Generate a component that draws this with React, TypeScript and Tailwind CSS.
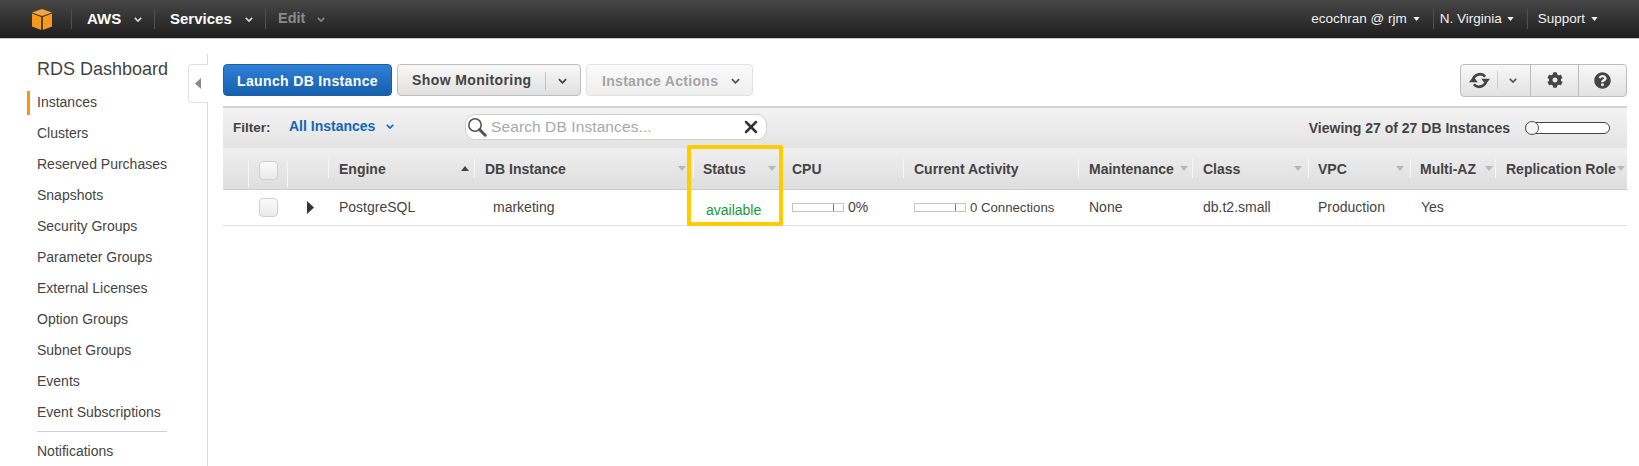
import { FaCog, FaQuestionCircle } from 'react-icons/fa';
import { X } from 'lucide-react';

const navItems = [
  'Instances',
  'Clusters',
  'Reserved Purchases',
  'Snapshots',
  'Security Groups',
  'Parameter Groups',
  'External Licenses',
  'Option Groups',
  'Subnet Groups',
  'Events',
  'Event Subscriptions',
];

const columns = [
  { label: 'Engine', sort: 'up', pad: 'pl-[10px]', caretClass: 'right-[5px]' },
  { label: 'DB Instance', pad: 'pl-[10px]', caretClass: 'right-[7px]' },
  { label: 'Status', pad: 'pl-[9px]', caretClass: 'right-[5px]' },
  { label: 'CPU', pad: 'pl-[10px]' },
  { label: 'Current Activity', pad: 'pl-[10px]' },
  { label: 'Maintenance', pad: 'pl-[10px]', caretClass: 'right-[4px]' },
  { label: 'Class', pad: 'pl-[10px]', caretClass: 'right-[6px]' },
  { label: 'VPC', pad: 'pl-[9px]', caretClass: 'right-[6px]' },
  { label: 'Multi-AZ', pad: 'pl-[9px]', caretClass: 'right-[2px]' },
  { label: 'Replication Role', pad: 'pl-[10px]', caretClass: 'right-[2px]' },
];

const gridCols = 'grid grid-cols-[25px_40px_40px_146px_219px_88px_122px_175px_114px_116px_102px_85px_132px]';

function Chevron({ className }: { className?: string }) {
  return (
    <svg viewBox="0 0 10 6" className={className} fill="none" stroke="currentColor" strokeWidth="2">
      <polyline points="1,1 5,5 9,1" />
    </svg>
  );
}

function Caret({ up, className }: { up?: boolean; className?: string }) {
  return (
    <svg viewBox="0 0 8 5" className={className} fill="currentColor">
      <polygon points={up ? '0,5 8,5 4,0' : '0,0 8,0 4,5'} />
    </svg>
  );
}

function RefreshIcon({ className }: { className?: string }) {
  return (
    <svg viewBox="0 0 24 24" className={className}>
      <g fill="none" stroke="currentColor" strokeWidth="3">
        <path d="M4.5 13 A8 8 0 0 1 18.5 7.5" />
        <path d="M19.5 11 A8 8 0 0 1 5.5 16.5" />
      </g>
      <polygon points="14,10 24,10 19,16.5" fill="currentColor" />
      <polygon points="0,14 10,14 5,7.5" fill="currentColor" />
    </svg>
  );
}

function SearchIcon({ className }: { className?: string }) {
  return (
    <svg viewBox="0 0 20 20" className={className} fill="none" stroke="currentColor">
      <circle cx="8" cy="8" r="6.2" strokeWidth="1.6" />
      <line x1="12.6" y1="12.6" x2="18.2" y2="18.2" strokeWidth="3" strokeLinecap="round" />
    </svg>
  );
}

function NavDivider() {
  return <div className="h-[20px] w-px bg-[#4f4f4f]" />;
}

function TopBar() {
  return (
    <header className="flex h-[39px] items-center border-b border-[#c8c8c8] bg-gradient-to-b from-[#474747] to-[#1e1e1e] text-white">
      <svg viewBox="0 0 20 21" className="ml-[32px] h-[21px] w-[20px]">
        <polygon points="10,0 20,3.5 10,7 0,3.5" fill="#f9a43a" />
        <polygon points="0,4.6 9.2,8 9.2,21 0,17.4" fill="#f8981d" />
        <polygon points="20,4.6 10.8,8 10.8,21 20,17.4" fill="#f8981d" />
      </svg>
      <div className="ml-[19px]"><NavDivider /></div>
      <span className="ml-[15px] w-[34px] text-[15px] font-bold">AWS</span>
      <Chevron className="ml-[13px] h-[5px] w-[8px] text-[#d8d8d8]" />
      <div className="ml-[12px]"><NavDivider /></div>
      <span className="ml-[15px] w-[62px] text-[15px] font-bold">Services</span>
      <Chevron className="ml-[13px] h-[5px] w-[8px] text-[#d8d8d8]" />
      <div className="ml-[12px]"><NavDivider /></div>
      <span className="ml-[12px] w-[26px] text-[14.5px] font-bold text-[#8a8a8a]">Edit</span>
      <Chevron className="ml-[13px] h-[5px] w-[8px] text-[#8a8a8a]" />

      <div className="ml-auto flex items-center text-[13.5px] text-[#f0f0f0]">
        <span>ecochran @ rjm</span>
        <Caret className="ml-[6px] h-[4px] w-[7px]" />
        <div className="ml-[13px]"><NavDivider /></div>
        <span className="ml-[6px]">N. Virginia</span>
        <Caret className="ml-[5px] h-[4px] w-[7px]" />
        <div className="ml-[13px]"><NavDivider /></div>
        <span className="ml-[10px]">Support</span>
        <Caret className="ml-[6px] mr-[41px] h-[4px] w-[7px]" />
      </div>
    </header>
  );
}

function Sidebar() {
  return (
    <aside className="relative mt-[15px] h-[412px] w-[208px] shrink-0 border-r border-[#d9d9d9] text-[#444]">
      <h1 className="ml-[37px] flex h-[30px] items-center text-[18px] font-normal">RDS Dashboard</h1>
      <nav className="mt-[3px] text-[14px]">
        {navItems.map((item, i) => (
          <div key={item} className="flex h-[31px] items-center pl-[27px]">
            <span className={`flex h-[24px] items-center border-l-[3px] pl-[7px] ${i === 0 ? 'border-[#f7941e]' : 'border-transparent'}`}>
              {item}
            </span>
          </div>
        ))}
      </nav>
      <div className="ml-[37px] mt-[3px] h-px w-[130px] bg-[#cfcfcf]" />
      <div className="ml-[37px] mt-[9px] text-[14px]">Notifications</div>
      {/* collapse tab sits over the sidebar rule */}
      <div className="absolute right-[-1px] top-[10px] flex h-[39px] w-[20px] items-center justify-center rounded-l-[4px] border border-r-0 border-[#e0e0e0] bg-white pr-[2px]">
        <svg viewBox="0 0 6 11" className="h-[11px] w-[6px] text-[#8a8a8a]" fill="currentColor">
          <polygon points="6,0 6,11 0,5.5" />
        </svg>
      </div>
    </aside>
  );
}

function Toolbar() {
  return (
    <div className="flex h-[32px] items-center text-[14px] font-bold">
      <button className="h-[32px] w-[169px] rounded-[4px] border border-[#1a5fa8] bg-gradient-to-b from-[#2f80d8] to-[#1560ac] pt-[2px] tracking-[0.35px] text-white">
        Launch DB Instance
      </button>
      <button className="ml-[5px] flex h-[32px] w-[184px] items-center rounded-[4px] border border-[#bdbdbd] bg-gradient-to-b from-[#f8f8f8] to-[#e0e0e0] pt-[1px] tracking-[0.4px] text-[#444]">
        <span className="ml-[14px] w-[133px] text-left">Show Monitoring</span>
        <span className="h-[18px] w-px bg-[#c4c4c4]" />
        <Chevron className="ml-[12px] h-[6px] w-[9px] text-[#444]" />
      </button>
      <button className="ml-[5px] flex h-[32px] w-[167px] items-center rounded-[4px] border border-[#e2e2e2] bg-gradient-to-b from-[#fafafa] to-[#efefef] pt-[2px] tracking-[0.3px] text-[#a5a5a5]">
        <span className="ml-[15px] text-left">Instance Actions</span>
        <Chevron className="ml-[13px] h-[6px] w-[9px] text-[#555]" />
      </button>
      <div className="ml-auto flex h-[33px] w-[167px] items-center rounded-[4px] border border-[#bdbdbd] bg-gradient-to-b from-[#f8f8f8] to-[#e2e2e2] text-[#444]">
        <div className="flex h-full w-[70px] items-center border-r border-[#bdbdbd]">
          <RefreshIcon className="ml-[8px] h-[21px] w-[21px]" />
          <span className="ml-[7px] h-[18px] w-px bg-[#cfcfcf]" />
          <Chevron className="ml-[11px] h-[5px] w-[8px] text-[#555]" />
        </div>
        <div className="flex h-full w-[48px] items-center justify-center border-r border-[#bdbdbd]">
          <FaCog className="text-[16px]" />
        </div>
        <div className="flex h-full flex-1 items-center justify-center">
          <FaQuestionCircle className="text-[17px]" />
        </div>
      </div>
    </div>
  );
}

function FilterBar() {
  return (
    <div className="mt-[10px] flex h-[42px] items-center border-t-2 border-[#d4d4d4] bg-gradient-to-b from-[#f3f3f3] to-[#e3e3e3] text-[#444]">
      <span className="ml-[10px] w-[56px] text-[13.5px] font-bold">Filter:</span>
      <div className="mb-[4px] flex w-[176px] items-center text-[#1166bb]">
        <span className="text-[14px] font-bold">All Instances</span>
        <Chevron className="ml-[11px] h-[5px] w-[8px]" />
      </div>
      <div className="mb-[2px] flex h-[26px] w-[302px] items-center rounded-[10px] border border-[#cfcfcf] bg-white">
        <SearchIcon className="ml-[1px] h-[20px] w-[20px] text-[#555]" />
        <span className="ml-[4px] text-[15.5px] tracking-[0.1px] text-[#a8a8a8]">Search DB Instances...</span>
        <X className="ml-auto mr-[5px] h-[20px] w-[20px] text-[#333]" strokeWidth={3} />
      </div>
      <span className="ml-auto text-[14px] font-bold">Viewing 27 of 27 DB Instances</span>
      <div className="ml-[15px] mr-[17px] flex h-[12px] w-[85px] items-center rounded-full border border-[#444] bg-white">
        <div className="-ml-px h-[14px] w-[14px] rounded-full border border-[#555] bg-[#f4f4f4]" />
      </div>
    </div>
  );
}

function Meter() {
  return (
    <div className="flex h-[9px] w-[52px] items-center justify-end border border-[#c4c4c4] bg-white pr-[9px]">
      <div className="h-full w-px bg-[#e0503f]" />
    </div>
  );
}

function Checkbox() {
  return <div className="h-[19px] w-[19px] rounded-[4px] border border-[#cfcfcf] bg-gradient-to-b from-[#fbfbfb] to-[#eaeaea]" />;
}

function InstancesTable() {
  return (
    <div className="relative">
      <div className={`${gridCols} h-[42px] items-center border-b border-[#cccccc] bg-gradient-to-b from-[#efefef] to-[#dedede] text-[14px] font-bold text-[#444]`}>
        <div />
        <div className="mb-[2px] flex h-[26px] items-start justify-center self-end border-x border-[#f7f7f7] pl-[1px]">
          <Checkbox />
        </div>
        <div />
        {columns.map((col) => (
          <div key={col.label} className={`relative flex h-[19px] items-center whitespace-nowrap border-l border-[#f7f7f7] pt-[2px] ${col.pad}`}>
            {col.label}
            {col.caretClass && (
              <Caret up={col.sort === 'up'} className={`absolute top-[7px] h-[5px] w-[8px] ${col.caretClass} ${col.sort === 'up' ? 'text-[#444]' : 'text-[#b8b8b8]'}`} />
            )}
          </div>
        ))}
      </div>
      <div className={`${gridCols} h-[36px] items-center border-b border-[#dddddd] text-[14px] text-[#444]`}>
        <div />
        <div className="flex justify-center pl-[1px]"><Checkbox /></div>
        <div className="flex justify-center pl-[4px]">
          <svg viewBox="0 0 7 13" className="h-[13px] w-[7px] text-[#333]" fill="currentColor">
            <polygon points="0,0 7,6.5 0,13" />
          </svg>
        </div>
        <div className="pl-[11px]">PostgreSQL</div>
        <div className="pl-[19px]">marketing</div>
        <div className="pl-[13px] pt-[6px] text-[#159a35]">available</div>
        <div className="flex items-center pl-[11px]">
          <Meter />
          <span className="ml-[4px]">0%</span>
        </div>
        <div className="flex items-center pl-[11px]">
          <Meter />
          <span className="ml-[4px] whitespace-nowrap text-[13.2px]">0 Connections</span>
        </div>
        <div className="pl-[11px]">None</div>
        <div className="pl-[11px]">db.t2.small</div>
        <div className="pl-[10px]">Production</div>
        <div className="pl-[11px]">Yes</div>
        <div />
      </div>
      {/* highlight drawn over the Status column */}
      <div className="pointer-events-none absolute left-[464px] top-[-3px] h-[81px] w-[96px] rounded-[2px] border-4 border-[#ffcc00]" />
    </div>
  );
}

export default function App() {
  return (
    <div className="h-[466px] w-[1639px] overflow-hidden bg-white font-['Liberation_Sans',Arial,sans-serif]">
      <TopBar />
      <div className="flex">
        <Sidebar />
        <main className="flex-1 pl-[15px] pr-[12px] pt-[25px]">
          <Toolbar />
          <FilterBar />
          <InstancesTable />
        </main>
      </div>
    </div>
  );
}
